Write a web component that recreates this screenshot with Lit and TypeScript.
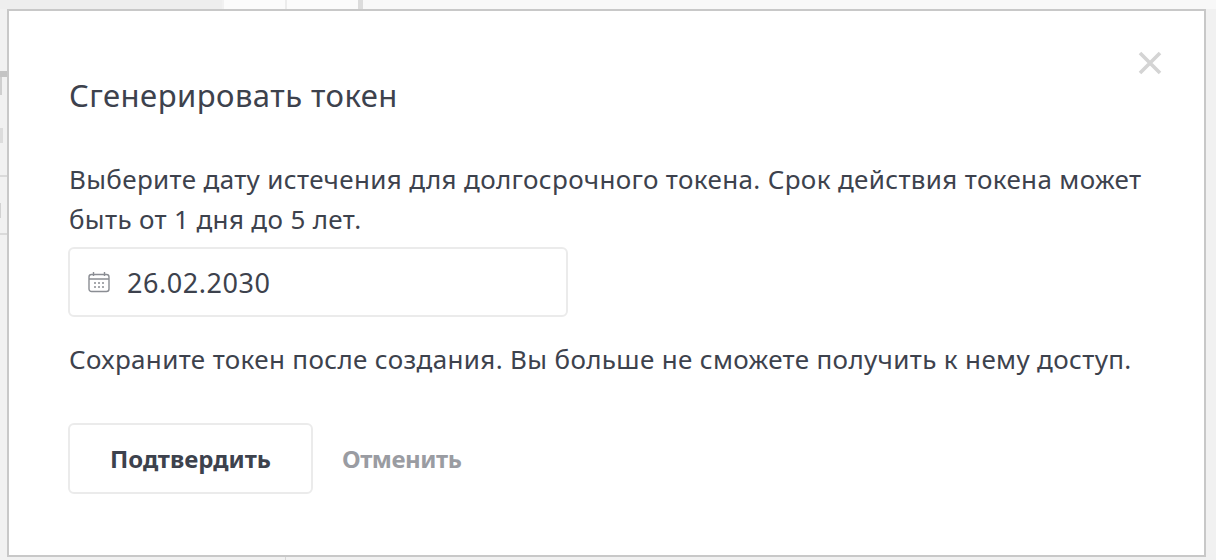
import { LitElement, html, css } from "lit";
import { customElement } from "lit/decorators.js";

@customElement("app-root")
export class AppRoot extends LitElement {
  static styles = css`
    :host { display: block; width: 1216px; height: 560px; overflow: hidden; background: #f1f1f1; font-family: "Noto Sans", "Open Sans", sans-serif; color: #3d424d; }
    .page { position: relative; width: 1216px; height: 560px; padding: 9px 10px 3px 7px; box-sizing: border-box; display: flex; }
    .bg { position: absolute; }
    .top-a { left: 0; top: 0; width: 222px; height: 9px; background: #eeeeee; }
    .top-b { left: 224px; top: 0; width: 134px; height: 9px; background: #fbfbfb; }
    .top-c { left: 285px; top: 0; width: 2px; height: 9px; background: #ececec; }
    .top-d { left: 358px; top: 0; width: 5px; height: 9px; background: #dcdcdc; }
    .top-e { left: 363px; top: 0; width: 853px; height: 9px; background: #f8f8f8; }
    .l1 { left: 0; top: 71px; width: 7px; height: 6px; background: #c4c4c4; }
    .l2 { left: 0; top: 77px; width: 2px; height: 18px; background: #cfcfcf; }
    .l3 { left: 0; top: 128px; width: 3px; height: 15px; background: #dcdcdc; }
    .l4 { left: 0; top: 175px; width: 7px; height: 2px; background: #dadada; }
    .l5 { left: 0; top: 233px; width: 7px; height: 2px; background: #dadada; }
    .l6 { left: 0; top: 203px; width: 1px; height: 15px; background: #d2d2d2; }
    .b1 { left: 285px; top: 556px; width: 1px; height: 4px; background: #d6d6d6; }
    .modal { position: relative; flex: 1; background: #fff; border: 2px solid #c8c8c8; padding: 64px 60px 0 59px; box-sizing: border-box; }
    h2 { margin: 0; padding-left: 1px; font-size: 31px; line-height: 40px; font-weight: 400; letter-spacing: 0.47px; }
    p { margin: 0; padding-left: 1px; font-size: 26px; line-height: 40px; letter-spacing: 0.35px; }
    .desc { margin-top: 44px; }
    .field { margin-top: 8px; width: 500px; height: 70px; border: 2px solid #ebebeb; border-radius: 6px; box-sizing: border-box; display: flex; align-items: center; padding-left: 18px; gap: 17px; font-size: 27px; letter-spacing: 0.55px; }
    .note { margin-top: 22px; }
    .actions { display: flex; align-items: center; margin-top: 44px; gap: 29px; }
    .btn { width: 245px; height: 71px; border: 2px solid #ebebeb; border-radius: 6px; background: #fff; box-sizing: border-box; font: 700 24px "Noto Sans", sans-serif; color: #3d424d; display: flex; align-items: center; justify-content: center; }
    .cancel { font-size: 24px; font-weight: 700; color: #9a9ca2; letter-spacing: -0.45px; }
    .close { position: absolute; top: 40px; right: 42px; }
  `;
  render() {
    return html`<div class="page">
      <div class="bg top-a"></div><div class="bg top-b"></div><div class="bg top-c"></div><div class="bg top-d"></div><div class="bg top-e"></div>
      <div class="bg l1"></div><div class="bg l2"></div><div class="bg l3"></div><div class="bg l4"></div><div class="bg l5"></div><div class="bg l6"></div><div class="bg b1"></div>
      <div class="modal">
        <svg class="close" width="24" height="24" viewBox="0 0 24 24"><path d="M2 2L22 22M22 2L2 22" stroke="#d4d4d4" stroke-width="3.6" fill="none"/></svg>
        <h2>Сгенерировать токен</h2>
        <p class="desc">Выберите дату истечения для долгосрочного токена. Срок действия токена может быть от 1 дня до 5 лет.</p>
        <div class="field">
          <svg width="22" height="22" viewBox="0 0 22 22" fill="none" stroke="#8a8d93" stroke-width="1.4"><rect x="1" y="3.5" width="20" height="17" rx="2.5"/><path d="M1 8h20M5.5 1v4M16.5 1v4"/><path d="M6 12h10M6 16h10" stroke-dasharray="2 2"/></svg>
          <span>26.02.2030</span>
        </div>
        <p class="note">Сохраните токен после создания. Вы больше не сможете получить к нему доступ.</p>
        <div class="actions"><div class="btn">Подтвердить</div><div class="cancel">Отменить</div></div>
      </div>
    </div>`;
  }
}
